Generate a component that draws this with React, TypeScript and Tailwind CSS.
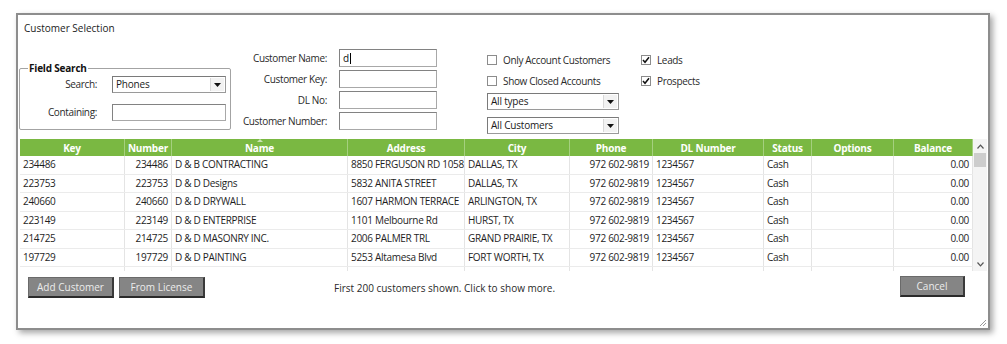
import React from "react";

const FONT = { fontFamily: '"Open Sans", "Noto Sans", sans-serif' };

type Row = {
  key: string;
  number: string;
  name: string;
  address: string;
  city: string;
  phone: string;
  dl: string;
  status: string;
  balance: string;
};

const ROWS: Row[] = [
  { key: "234486", number: "234486", name: "D & B CONTRACTING", address: "8850 FERGUSON RD 1058", city: "DALLAS, TX", phone: "972 602-9819", dl: "1234567", status: "Cash", balance: "0.00" },
  { key: "223753", number: "223753", name: "D & D Designs", address: "5832 ANITA STREET", city: "DALLAS, TX", phone: "972 602-9819", dl: "1234567", status: "Cash", balance: "0.00" },
  { key: "240660", number: "240660", name: "D & D DRYWALL", address: "1607 HARMON TERRACE", city: "ARLINGTON, TX", phone: "972 602-9819", dl: "1234567", status: "Cash", balance: "0.00" },
  { key: "223149", number: "223149", name: "D & D ENTERPRISE", address: "1101 Melbourne Rd", city: "HURST, TX", phone: "972 602-9819", dl: "1234567", status: "Cash", balance: "0.00" },
  { key: "214725", number: "214725", name: "D & D MASONRY INC.", address: "2006 PALMER TRL", city: "GRAND PRAIRIE, TX", phone: "972 602-9819", dl: "1234567", status: "Cash", balance: "0.00" },
  { key: "197729", number: "197729", name: "D & D PAINTING", address: "5253 Altamesa Blvd", city: "FORT WORTH, TX", phone: "972 602-9819", dl: "1234567", status: "Cash", balance: "0.00" },
];

const COLS = "grid grid-cols-[105px_47px_176px_117px_105px_83px_111px_48px_82px_79px]";

const HEADERS = ["Key", "Number", "Name", "Address", "City", "Phone", "DL Number", "Status", "Options", "Balance"];

const DownArrow = () => (
  <svg width="7" height="4" viewBox="0 0 7 4">
    <path d="M0 0 L7 0 L3.5 4 Z" fill="#111" />
  </svg>
);

const Select = ({ value, width }: { value: string; width: string }) => (
  <div className={`${width} h-[17px] flex items-center border border-[#9a9a9a] border-t-[#7a7a7a] border-l-[#7a7a7a] bg-white`}>
    <span className="flex-1 pl-[3px] leading-[15px] text-[10px] tracking-[-0.2px] text-[#1a1a1a]">{value}</span>
    <div className="w-[14px] h-[13px] mr-[1px] flex items-center justify-center bg-[#f2f2f2] border-l border-[#d8d8d8]">
      <DownArrow />
    </div>
  </div>
);

const TextBox = ({ value, width, height }: { value?: string; width: string; height: string }) => (
  <div className={`${width} ${height} flex items-center border border-[#a8a8a8] border-t-[#828282] border-l-[#828282] bg-white`}>
    {value && (
      <span className="pl-[3px] text-[10px] leading-[14px] text-[#111] flex items-center">
        {value}
        <span className="ml-[1px] inline-block w-[1px] h-[11px] bg-black" />
      </span>
    )}
  </div>
);

const Check = ({ label, checked }: { label: string; checked?: boolean }) => (
  <div className="h-[14px] flex items-center">
    <div className="w-[10px] h-[10px] border border-[#8c8c8c] bg-white flex items-center justify-center">
      {checked && (
        <svg width="8" height="8" viewBox="0 0 8 8">
          <path d="M1 4 L3 6.3 L7 1.2" stroke="#111" strokeWidth="1.5" fill="none" />
        </svg>
      )}
    </div>
    <span className="ml-[6px] text-[10px] tracking-[-0.35px] text-[#2a2a2a]">{label}</span>
  </div>
);

const GrayButton = ({ label, width }: { label: string; width: string }) => (
  <button
    className={`${width} h-[21px] flex items-center justify-center bg-[#858585] border border-[#6a6a6a] border-b-[2px] border-r-[2px] border-b-[#2b2b2b] border-r-[#3a3a3a] text-[10px] text-[#ececec]`}
  >
    {label}
  </button>
);

const Cell = ({ children, align = "left" }: { children?: React.ReactNode; align?: "left" | "right" }) => (
  <div
    className={`h-full px-[3px] flex items-center border-r border-[#e4e4e4] whitespace-nowrap overflow-hidden ${
      align === "right" ? "justify-end" : "justify-start"
    }`}
  >
    {children}
  </div>
);

export default function App() {
  return (
    <div className="w-[1007px] h-[344px] bg-white pt-[13px] pl-[16px] overflow-hidden" style={FONT}>
      <div className="w-[974px] h-[317px] bg-white border-2 border-[#8d8d8d] shadow-[3px_3px_6px_rgba(0,0,0,0.35)] flex flex-col text-[#1e1e1e]">
        {/* title */}
        <div className="mt-[5px] ml-[6px] h-[16px] leading-[16px] text-[10px] text-[#222]">Customer Selection</div>

        {/* filters */}
        <div className="h-[103px] flex items-start">
          <fieldset className="ml-[1px] mt-[26px] w-[212px] h-[68px] border border-[#a3a3a3] rounded-[2px] px-0 pb-[8px]">
            <legend className="ml-[8px] px-[1px] text-[10px] leading-[12px] font-bold tracking-[-0.2px] text-[#111]">Field Search</legend>
            <div className="pt-[2px] flex items-center">
              <span className="w-[77px] text-right text-[10px] tracking-[-0.35px] text-[#2a2a2a]">Search:</span>
              <div className="ml-[15px]">
                <Select value="Phones" width="w-[114px]" />
              </div>
            </div>
            <div className="mt-[11px] flex items-center">
              <span className="w-[77px] text-right text-[10px] tracking-[-0.35px] text-[#2a2a2a]">Containing:</span>
              <div className="ml-[15px]">
                <TextBox width="w-[114px]" height="h-[17px]" />
              </div>
            </div>
          </fieldset>

          <div className="w-[206px] pt-[13px] flex flex-col gap-[3px]">
            {[
              ["Customer Name:", "d"],
              ["Customer Key:", ""],
              ["DL No:", ""],
              ["Customer Number:", ""],
            ].map(([label, value]) => (
              <div key={label} className="h-[18px] flex items-center justify-end">
                <span className="text-[10px] tracking-[-0.35px] text-[#2a2a2a]">{label}</span>
                <div className="ml-[12px]">
                  <TextBox value={value} width="w-[98px]" height="h-[18px]" />
                </div>
              </div>
            ))}
          </div>

          <div className="ml-[50px] pt-[17px] flex flex-col">
            <Check label="Only Account Customers" />
            <div className="mt-[7px]">
              <Check label="Show Closed Accounts" />
            </div>
            <div className="mt-[5px]">
              <Select value="All types" width="w-[132px]" />
            </div>
            <div className="mt-[7px]">
              <Select value="All Customers" width="w-[132px]" />
            </div>
          </div>

          <div className="ml-[22px] pt-[17px] flex flex-col">
            <Check label="Leads" checked />
            <div className="mt-[7px]">
              <Check label="Prospects" checked />
            </div>
          </div>
        </div>

        {/* grid */}
        <div className="ml-[2px] flex h-[132px]">
          <div className="w-[953px] flex flex-col">
            <div className={`${COLS} h-[17px] bg-[#7ab842]`}>
              {HEADERS.map((h) => (
                <div
                  key={h}
                  className="relative h-full flex items-center justify-center pt-[1px] border-r border-[#a5d07f] text-[10px] font-bold tracking-[-0.2px] text-white"
                >
                  {h === "Name" && (
                    <svg className="absolute top-0 left-1/2 -translate-x-1/2" width="6" height="3" viewBox="0 0 6 3">
                      <path d="M0 3 L6 3 L3 0 Z" fill="#c9e3b3" />
                    </svg>
                  )}
                  {h}
                </div>
              ))}
            </div>
            <div className="flex-1 overflow-hidden text-[10px] tracking-[-0.3px] text-[#1e1e1e]">
              {ROWS.map((r) => (
                <div key={r.key} className={`${COLS} h-[18.5px] border-b border-[#ebebeb]`}>
                  <Cell>{r.key}</Cell>
                  <Cell align="right">{r.number}</Cell>
                  <Cell>{r.name}</Cell>
                  <Cell>{r.address}</Cell>
                  <Cell>{r.city}</Cell>
                  <Cell align="right">{r.phone}</Cell>
                  <Cell>{r.dl}</Cell>
                  <Cell>{r.status}</Cell>
                  <Cell />
                  <Cell align="right">{r.balance}</Cell>
                </div>
              ))}
              {/* partially visible next row */}
              <div className={`${COLS} h-[18.5px]`}>
                {HEADERS.map((h) => (
                  <Cell key={h} />
                ))}
              </div>
            </div>
          </div>
          {/* scrollbar */}
          <div className="w-[14px] h-full bg-[#f4f4f4] flex flex-col items-center">
            <div className="h-[14px] flex items-center justify-center">
              <svg width="7" height="5" viewBox="0 0 7 5">
                <path d="M0.5 4.5 L3.5 1.2 L6.5 4.5" stroke="#555" strokeWidth="1.2" fill="none" />
              </svg>
            </div>
            <div className="w-[12px] h-[14px] bg-[#cdcdcd]" />
            <div className="flex-1" />
            <div className="h-[14px] flex items-center justify-center">
              <svg width="7" height="5" viewBox="0 0 7 5">
                <path d="M0.5 0.5 L3.5 3.8 L6.5 0.5" stroke="#555" strokeWidth="1.2" fill="none" />
              </svg>
            </div>
          </div>
        </div>

        {/* bottom */}
        <div className="mt-[6px] ml-[10px] flex items-start">
          <GrayButton label="Add Customer" width="w-[86px]" />
          <div className="ml-[5px]">
            <GrayButton label="From License" width="w-[86px]" />
          </div>
          <span className="ml-[129px] mt-[4px] text-[10px] text-[#2a2a2a]">First 200 customers shown. Click to show more.</span>
          <div className="flex-1" />
          <div className="mr-[23px] -mt-[1px]">
            <GrayButton label="Cancel" width="w-[65px]" />
          </div>
        </div>

        <div className="flex-1 flex items-end justify-end pr-[1px] pb-[1px]">
          <svg width="9" height="9" viewBox="0 0 9 9">
            <path d="M8 2 L2 8 M8 5 L5 8" stroke="#9a9a9a" strokeWidth="1" />
          </svg>
        </div>
      </div>
    </div>
  );
}
